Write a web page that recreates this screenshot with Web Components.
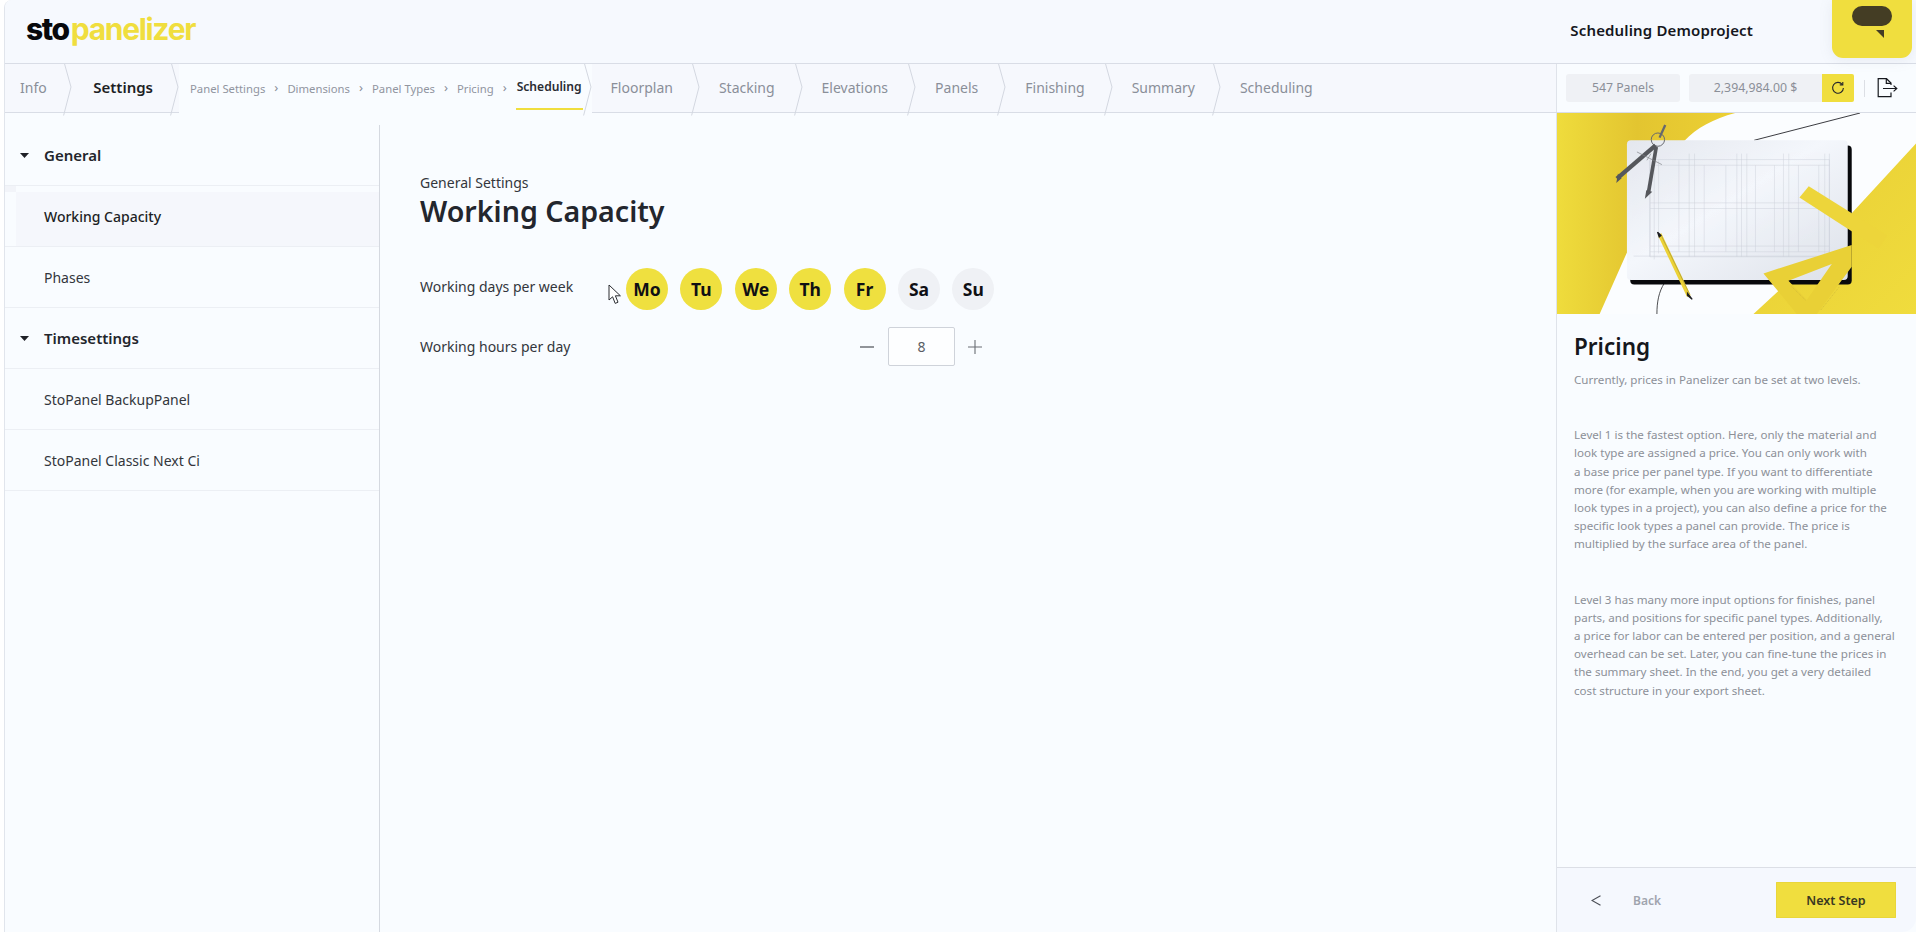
<!DOCTYPE html>
<html lang="en"><head><meta charset="utf-8"><title>Panelizer</title>
<style>
html,body{margin:0;height:100%;background:#fff;overflow:hidden}
body{font-family:"Noto Sans","Open Sans",sans-serif;color:#26282e}
</style></head><body>
<app-shell>
  <app-header slot="header" project="Scheduling Demoproject"></app-header>
  <app-stepper slot="stepper"></app-stepper>
  <side-menu slot="side">
    <menu-row group>General</menu-row>
    <menu-row active>Working Capacity</menu-row>
    <menu-row>Phases</menu-row>
    <menu-row group>Timesettings</menu-row>
    <menu-row>StoPanel BackupPanel</menu-row>
    <menu-row>StoPanel Classic Next Ci</menu-row>
  </side-menu>
  <capacity-form slot="main"></capacity-form>
  <help-panel slot="help"></help-panel>
</app-shell>
<script>
function def(name, css, html, init){
  customElements.define(name, class extends HTMLElement{
    connectedCallback(){
      if(this.shadowRoot) return;
      const r=this.attachShadow({mode:'open'});
      r.innerHTML='<style>'+css+'</style>'+(typeof html==='function'?html(this):html);
      if(init) init(this,r);
    }
  });
}
const chev='<svg class="chev" width="9" height="56" viewBox="0 0 9 56" fill="none"><path d="M.6 .5 8 27 .6 55.5" stroke="#d3d7e0" stroke-width="1"/></svg>';

def('app-shell',`
:host{display:grid;grid-template-columns:1fr;grid-template-rows:64px 49px 1fr;height:932px;box-sizing:border-box;margin-left:4px;border-left:1px solid #e1e5ec;border-top-left-radius:8px;background:#f9fcff;overflow:hidden}
.body{display:grid;grid-template-columns:375px 1fr 360px;min-height:0}
`,`<slot name="header"></slot><slot name="stepper"></slot>
<div class="body"><slot name="side"></slot><slot name="main"></slot><slot name="help"></slot></div>`);

def('app-header',`
:host{display:flex;align-items:flex-start;justify-content:space-between;background:#f6f9fe;border-bottom:1px solid #d9dde6;box-sizing:border-box;height:64px;position:relative}
.logo{font-family:Inter,sans-serif;font-weight:700;font-size:30px;letter-spacing:-1.3px;line-height:30px;margin:14px 0 0 21px;color:#f0de3e;white-space:nowrap}
.logo b{color:#08090c;font-weight:800;letter-spacing:-1.4px;margin-right:2px}
.title{font-size:15px;font-weight:600;color:#15171d;line-height:20px;margin:20px 163px 0 0;letter-spacing:.15px}
.tab{position:absolute;right:4px;top:0;width:80px;height:58px;background:#f0de3e;border-radius:0 0 11px 11px;box-shadow:0 2px 14px rgba(120,130,150,.12)}
.tab i{position:absolute;left:20px;top:6px;width:40px;height:20px;border-radius:10px;background:#443d24}
.tab svg{position:absolute;left:44px;top:30px}
`,h=>`<div class="logo"><b>sto</b>panelizer</div><div class="title">${h.getAttribute('project')}</div>
<div class="tab"><i></i><svg width="8" height="8"><path d="M0 0H8V8Z" fill="#443d24"/></svg></div>`);

def('nav-step',`
:host{display:flex;align-items:center;height:49px;font-size:14px;color:#8a8f99;white-space:nowrap}
:host([current]){color:#1d1f25;font-weight:600;font-size:15px}
span{padding:0 19px 2px 19px}
:host([first]) span{padding-left:15px;padding-right:16px}
:host([current]) span{padding:0 17px 2px 21.5px}
:host([tight]) span{padding-right:17px}
:host([snug]) span{padding-right:18px}
.chev{flex:none;margin-top:-1px}
`,`<span><slot></slot></span>${chev}`);

def('sub-steps',`
:host{display:flex;align-items:center;height:49px;background:#f9fcff;padding-left:11px;font-size:11.3px;color:#91959f;white-space:nowrap}
s{text-decoration:none;width:22px;text-align:center;font-size:13px;color:#8a8e98;margin-top:-2px}
b{font-weight:600;color:#2a2c33;position:relative;height:49px;line-height:46px;padding:0 1px;font-size:12.1px}
b:after{content:"";position:absolute;left:0;right:0;bottom:3px;height:2px;background:#f0de3e}
`,`<span>Panel Settings</span><s>›</s><span>Dimensions</span><s>›</s><span>Panel Types</span><s>›</s><span>Pricing</span><s>›</s><b>Scheduling</b>`);

def('app-stepper',`
:host{display:flex;align-items:stretch;background:#f6f8fd;border-bottom:1px solid #d9dde6;box-sizing:border-box;height:49px;justify-content:space-between}
.l{display:flex;align-items:center}
.wrap{display:flex;align-items:center}
.chev{flex:none;margin-top:-1px;background:#f9fcff}
.r{width:360px;box-sizing:border-box;border-left:1px solid #dfe3ea;background:#f9fcff;display:flex;align-items:center;padding-left:9px;font-size:12.3px;color:#8b8f98}
.pill{background:#eff1f5;height:28px;line-height:28px;text-align:center;border-radius:3px}
.a{width:114px;margin-right:9px}
.b{width:133px;border-radius:3px 0 0 3px}
.btn{width:32px;height:28px;background:#f0de3e;display:grid;place-items:center;border-radius:0 2px 2px 0}
.sep{width:1px;height:17px;background:#dcdfe5;margin:0 12px 0 10px}
`,`<div class="l"><nav-step first>Info</nav-step><nav-step current>Settings</nav-step><sub-steps></sub-steps><div class="wrap">${chev}</div>
<nav-step snug>Floorplan</nav-step><nav-step>Stacking</nav-step><nav-step>Elevations</nav-step><nav-step>Panels</nav-step><nav-step>Finishing</nav-step><nav-step tight>Summary</nav-step><span style="font-size:14px;color:#8a8f99;padding:0 0 2px 19px">Scheduling</span></div>
<div class="r"><div class="pill a">547 Panels</div><div class="pill b">2,394,984.00 $</div>
<div class="btn"><svg width="14" height="14" viewBox="0 0 14 14" fill="none" stroke="#23252b" stroke-width="1.1"><path d="M11.2 3.4A5.4 5.4 0 1 0 12.4 7"/><path d="M11.8 .9V3.9H8.8" stroke-width="1.1"/></svg></div>
<div class="sep"></div>
<svg width="21" height="20" viewBox="0 0 21 20" fill="none" stroke="#17191f" stroke-width="1.2"><path d="M14 7V5L9.5 .7H1.2V18.7H14V14.6"/><path d="M9.3 .8V5.3H14"/><path d="M6 10.5H19.8M16.6 7.6 19.8 10.5 16.6 13.4"/></svg></div>`);

def('side-menu',`
:host{display:block;margin-top:12px;border-right:1px solid #d5d9e0;position:relative}
:host:before{content:"";position:absolute;left:0;top:61px;width:11px;height:6px;background:#f2f4f9}
`,`<slot></slot>`);

def('menu-row',`
:host{display:flex;align-items:center;height:61px;box-sizing:border-box;border-bottom:1px solid #eceff4;padding-left:39px;font-size:14px;color:#33363c;position:relative}
:host([group]){font-size:15px;font-weight:600;color:#23262c}
:host([group]) svg{display:block}
:host([active]){color:#1d1f25;font-weight:500;background:linear-gradient(#f9fcff 6px,#f5f7fc 6px);background-repeat:no-repeat;background-position:11px 0;background-size:100% 100%}
svg{display:none;position:absolute;left:15px;top:28px}
`,`<svg width="9" height="5"><path d="M0 0H9L4.5 5Z" fill="#1f2127"/></svg><slot></slot>`);

def('day-chip',`
:host{display:grid;place-items:center;width:42px;height:42px;border-radius:50%;background:#efe03f;font-size:17.5px;font-weight:700;color:#0f1014}
:host([off]){background:#eff1f5}
`,`<slot></slot>`);

def('num-stepper',`
:host{display:flex;align-items:center;font-size:14px;color:#5a5d64}
.i{width:67px;height:39px;box-sizing:border-box;border:1px solid #cfd3da;border-radius:2px;background:#fdfeff;display:grid;place-items:center;margin:0 13px 0 14px}
svg{display:block}
`,`<svg width="14" height="14"><path d="M0 7H14" stroke="#4b4e55" stroke-width="1.2"/></svg><div class="i"><slot></slot></div><svg width="14" height="14"><path d="M0 7H14M7 0V14" stroke="#6a6d74" stroke-width="1.1"/></svg>`);

def('capacity-form',`
:host{display:block;padding:60px 0 0 40px;color:#33363c;font-size:14px;position:relative}
.sup{line-height:20px}
h1{margin:-2px 0 0;font-size:28.6px;font-weight:600;line-height:40px;color:#23262d}
.row{display:flex;align-items:center;width:591px}
.days{margin-top:37px;height:42px}
.days .lab{width:206px;margin-top:-5px;flex:none}
.chips{display:flex;gap:12.4px}
.hours{margin-top:17px;height:39px;justify-content:space-between;width:562px}
.cur{position:absolute;left:228px;top:171px}
`,`<div class="sup">General Settings</div><h1>Working Capacity</h1>
<div class="row days"><div class="lab">Working days per week</div><div class="chips"><day-chip>Mo</day-chip><day-chip>Tu</day-chip><day-chip>We</day-chip><day-chip>Th</day-chip><day-chip>Fr</day-chip><day-chip off>Sa</day-chip><day-chip off>Su</day-chip></div></div>
<div class="row hours"><div>Working hours per day</div><num-stepper>8</num-stepper></div>
<svg class="cur" width="14" height="21" viewBox="0 0 14 21"><path d="M1 1V16L4.6 12.8 7.2 19.4 10 18.2 7.4 11.8H12.4Z" fill="#fff" stroke="#2a2c31" stroke-width="1"/></svg>`);

def('plan-art',`
:host{display:block;height:201px;overflow:hidden;background:#fbfdff}
svg{display:block;width:359px;height:201px}
`,`<svg viewBox="20 8 1078 604" preserveAspectRatio="none">
<defs>
<linearGradient id="y1" x1="0" x2="1" y1="0" y2="0"><stop offset="0" stop-color="#efdc3c"/><stop offset=".45" stop-color="#e3c530"/><stop offset="1" stop-color="#ecd034"/></linearGradient>
<linearGradient id="y2" x1="0" x2="1" y1="0" y2="1"><stop offset="0" stop-color="#e8cd34"/><stop offset="1" stop-color="#f0dc3d"/></linearGradient>
<linearGradient id="t" x1="0" x2="1" y1="0" y2="1"><stop offset="0" stop-color="#e4e7ee"/><stop offset=".45" stop-color="#f4f7fc"/><stop offset="1" stop-color="#dde1e9"/></linearGradient>
</defs>
<rect x="20" y="8" width="1078" height="604" fill="#fbfdff"/>
<path d="M20 8H555C490 26 440 52 402 92L300 300 228 432 148 612H20Z" fill="url(#y1)"/>
<path d="M1098 100V612H610L720 510Z" fill="url(#y2)"/>
<path d="M612 90 930 8" stroke="#3a3b40" stroke-width="3"/>
<path d="M342 520C326 545 320 575 320 612" stroke="#2b2c30" stroke-width="2.5" fill="none"/>
<rect x="240" y="106" width="665" height="417" rx="12" fill="#08090c"/>
<rect x="230" y="90" width="663" height="420" rx="12" fill="url(#t)"/>
<g stroke="#c3c7d2" stroke-width="1.4" fill="none" opacity=".8">
<path d="M300 148H838V440H300ZM300 165H838M300 278H838M300 295H838M250 438H838M300 408H838M300 425H838"/>
<path d="M298 150V440M312 150V448M325 150V430M386 150V425M417 130V440M433 130V440M462 165V425M527 165V425M560 130V440M574 130V440M590 130V440M616 165V425M673 165V425M700 130V440M716 130V440M745 165V425M806 165V425M824 130V440M838 130V440"/>
</g>
<path d="M748 262 776 228 1012 376 986 416Z" fill="#edd53a"/>
<path d="M640 490 905 405V470L800 612H740ZM715 512 770 570 845 462Z" fill="#e9d036" fill-rule="evenodd"/>
<path d="M725 530 768 572M812 600 868 530" stroke="#c9b23a" stroke-width="2" stroke-dasharray="3 3"/>
<path d="M328 372 416 558" stroke="#ecd236" stroke-width="12"/>
<path d="M334 378 418 552" stroke="#8d7f35" stroke-width="1.5"/>
<path d="M322 366 332 376 327 380ZM412 550 426 568 412 556Z" fill="#1d1e22" stroke="#1d1e22" stroke-width="4"/>
<circle cx="323" cy="88" r="20" fill="none" stroke="#66686e" stroke-width="3"/>
<path d="M345 44 328 82" stroke="#66686e" stroke-width="7"/>
<path d="M316 105 200 205" stroke="#55575c" stroke-width="13"/>
<path d="M203 190 198 218 214 204Z" fill="#55575c"/>
<path d="M318 110 295 245" stroke="#55575c" stroke-width="11"/>
<path d="M288 240 284 266 306 245Z" fill="#55575c"/>
<path d="M260 125 335 163M290 150 302 130" stroke="#7c7e84" stroke-width="2"/>
</svg>`);

def('help-panel',`
:host{display:flex;flex-direction:column;border-left:1px solid #dfe3ea;min-height:0;background:#f9fcff;border-bottom-right-radius:14px;overflow:hidden;box-sizing:border-box}
.txt{flex:1;padding:21px 18px 0 17px;font-size:11.6px;line-height:18.2px;color:#8c9098;white-space:nowrap}
h2{margin:0 0 12px;font-size:22.5px;line-height:24px;font-weight:600;color:#15171c}
p{margin:0 0 37px}
footer{height:65px;box-sizing:border-box;border-top:1px solid #dcdfe6;background:#f5f8fe;display:flex;align-items:center;padding:0 20px 0 34px}
.lt{width:10px;margin-right:32px}
.back{font-size:12px;font-weight:600;color:#a0a4ae;flex:1}
.next{width:120px;height:36px;background:#f0de3e;font-size:12.5px;font-weight:600;color:#3a3822;display:grid;place-items:center;border-radius:1px;box-shadow:0 0 0 1px #e9d63a inset}
`,`<plan-art></plan-art>
<div class="txt"><h2>Pricing</h2>
<p>Currently, prices in Panelizer can be set at two levels.</p>
<p>Level 1 is the fastest option. Here, only the material and<br>look type are assigned a price. You can only work with<br>a base price per panel type. If you want to differentiate<br>more (for example, when you are working with multiple<br>look types in a project), you can also define a price for the<br>specific look types a panel can provide. The price is<br>multiplied by the surface area of the panel.</p>
<p>Level 3 has many more input options for finishes, panel<br>parts, and positions for specific panel types. Additionally,<br>a price for labor can be entered per position, and a general<br>overhead can be set. Later, you can fine-tune the prices in<br>the summary sheet. In the end, you get a very detailed<br>cost structure in your export sheet.</p></div>
<footer><svg class="lt" width="10" height="11" viewBox="0 0 10 11" fill="none"><path d="M9.5 .8 1 5.5 9.5 10.2" stroke="#4a4d55" stroke-width="1.1"/></svg><div class="back">Back</div><div class="next">Next Step</div></footer>`);
</script>
</body></html>
